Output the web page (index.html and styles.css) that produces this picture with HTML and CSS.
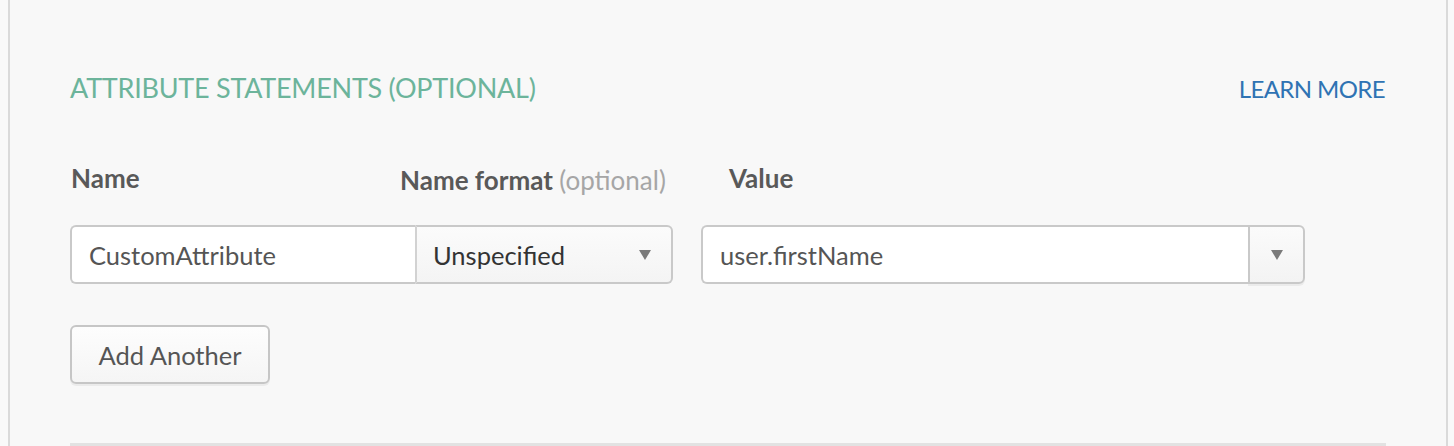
FILE: index.html
```html
<!DOCTYPE html>
<html>
<head>
<meta charset="utf-8">
<link rel="stylesheet" href="styles.css">
</head>
<body>
<div class="panel">
  <div class="head">
    <h2 class="title">ATTRIBUTE STATEMENTS (OPTIONAL)</h2>
    <a class="learn" href="#">LEARN MORE</a>
  </div>
  <div class="labels">
    <div class="lbl lbl-name">Name</div>
    <div class="lbl lbl-format">Name format <span class="opt">(optional)</span></div>
    <div class="lbl lbl-value">Value</div>
  </div>
  <div class="row">
    <div class="field name-input">CustomAttribute</div>
    <div class="select"><span class="sel-text">Unspecified</span><span class="caret"></span></div>
    <div class="combo">
      <div class="combo-input">user.firstName</div>
      <div class="combo-btn"><span class="caret"></span></div>
    </div>
  </div>
  <div class="actions"><button class="btn">Add Another</button></div>
  <div class="rule"></div>
</div>
</body>
</html>
```

FILE: styles.css
```css
html, body {
  margin: 0;
  padding: 0;
  background: #f9f9f9;
}
body {
  font-family: Lato, "Open Sans", sans-serif;
}
.panel {
  margin-left: 8px;
  width: 1440px;
  height: 446px;
  box-sizing: border-box;
  border-left: 2px solid #dadada;
  border-right: 2px solid #dadada;
  background: #f8f8f8;
  padding: 0 60px;
  display: flex;
  flex-direction: column;
}
.head {
  display: flex;
  justify-content: space-between;
  align-items: baseline;
  padding-top: 70px;
}
.title {
  margin: 0;
  font-weight: 400;
  font-size: 27px;
  letter-spacing: -0.25px;
  line-height: 36px;
  color: #6cb49b;
}
.learn {
  font-size: 24px;
  letter-spacing: -0.6px;
  line-height: 36px;
  color: #2f73b3;
  text-decoration: none;
  margin-right: 1px;
}
.labels {
  display: grid;
  grid-template-columns: 330px 329px 1fr;
  margin-top: 55px;
}
.lbl {
  font-size: 26px;
  line-height: 32px;
  font-weight: 700;
  color: #595959;
}
.lbl-name { padding-left: 1px; }
.lbl-format { padding-top: 2px; }
.opt {
  font-weight: 400;
  color: #a6a6a6;
}
.row {
  display: flex;
  margin-top: 29px;
  height: 59px;
}
.field, .select, .combo-input, .combo-btn {
  box-sizing: border-box;
  height: 59px;
  border: 2px solid #c9c9c9;
  display: flex;
  align-items: center;
  font-size: 25.5px;
  color: #555;
}
.name-input {
  width: 345px;
  background: #fff;
  border-right: 0;
  border-radius: 6px 0 0 6px;
  padding-left: 17px;
}
.select {
  width: 258px;
  background: linear-gradient(#fbfbfb, #f4f4f4);
  border-radius: 0 6px 6px 0;
  padding: 0 20px 0 16px;
  justify-content: space-between;
  color: #333;
  border-left-color: #d2d2d2;
}
.caret {
  width: 0;
  height: 0;
  border-left: 6px solid transparent;
  border-right: 6px solid transparent;
  border-top: 10px solid #7a7a7a;
}
.combo {
  display: flex;
  margin-left: 28px;
}
.combo-input {
  width: 547px;
  background: #fff;
  border-right: 0;
  border-radius: 6px 0 0 6px;
  padding-left: 17px;
}
.combo-btn {
  width: 57px;
  background: linear-gradient(#fbfbfb, #f3f3f3);
  border-radius: 0 6px 6px 0;
  justify-content: center;
  box-shadow: 0 2px 0 rgba(0,0,0,0.05);
}
.actions {
  margin-top: 41px;
}
.btn {
  width: 200px;
  height: 59px;
  box-sizing: border-box;
  border: 2px solid #c6c6c6;
  border-radius: 6px;
  background: linear-gradient(#fdfdfd, #f5f5f5);
  box-shadow: 0 2px 0 rgba(0,0,0,0.05);
  font-family: Lato, "Open Sans", sans-serif;
  font-size: 25.5px;
  color: #555;
  padding: 0;
}
.rule {
  margin-top: auto;
  height: 3px;
  background: #e2e2e2;
}
```
